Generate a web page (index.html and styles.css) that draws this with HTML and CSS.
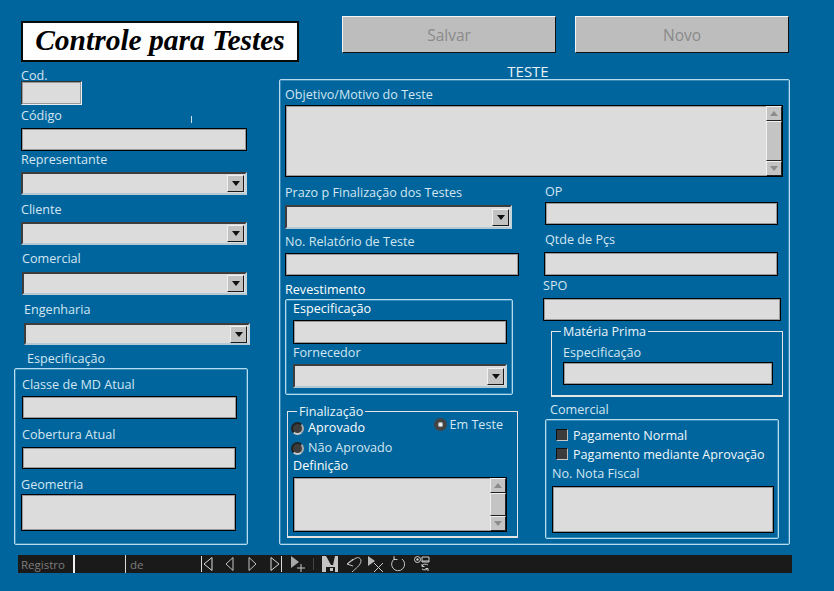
FILE: index.html
```html
<!DOCTYPE html>
<html lang="pt-BR">
<head>
  <meta charset="UTF-8" />
  <title>Controle para Testes</title>
  <link rel="stylesheet" href="styles.css">
</head>
<body>
  <div class="form">
    <!-- coluna da esquerda -->
    <div class="side">
      <div class="title">Controle para Testes</div>
      <label class="lbl l-cod">Cod.</label>
      <input class="inp i-cod" type="text" />
      <label class="lbl l-codigo">Código</label>
      <span class="tick"></span>
      <input class="inp i-codigo" type="text" />
      <label class="lbl l-rep">Representante</label>
      <div class="combo c-rep"><span class="arrow"><i></i></span></div>
      <label class="lbl l-cli">Cliente</label>
      <div class="combo c-cli"><span class="arrow"><i></i></span></div>
      <label class="lbl l-com">Comercial</label>
      <div class="combo c-com"><span class="arrow"><i></i></span></div>
      <label class="lbl l-eng">Engenharia</label>
      <div class="combo c-eng"><span class="arrow"><i></i></span></div>
      <label class="lbl l-esp">Especificação</label>
      <div class="box spec">
        <label class="lbl l-classe">Classe de MD Atual</label>
        <input class="inp i-classe" type="text" />
        <label class="lbl l-cob">Cobertura Atual</label>
        <input class="inp i-cob" type="text" />
        <label class="lbl l-geo">Geometria</label>
        <input class="inp i-geo" type="text" />
      </div>
    </div>

    <!-- coluna principal -->
    <div class="main">
      <div class="actions">
        <button class="btn" type="button">Salvar</button>
        <button class="btn" type="button">Novo</button>
      </div>
      <div class="teste">TESTE</div>
      <div class="box panel">
        <label class="lbl l-obj">Objetivo/Motivo do Teste</label>
        <div class="memo m-obj">
          <div class="scroll">
            <span class="sb-btn"><i class="up"></i></span>
            <span class="sb-thumb"></span>
            <span class="sb-btn"><i class="down"></i></span>
          </div>
        </div>
        <div class="cols">
          <div class="col-a">
            <label class="lbl l-prazo">Prazo p Finalização dos Testes</label>
            <div class="combo c-prazo"><span class="arrow"><i></i></span></div>
            <label class="lbl l-rel">No. Relatório de Teste</label>
            <input class="inp i-rel" type="text" />
            <label class="lbl strong l-rev">Revestimento</label>
            <div class="box rev">
              <label class="lbl strong l-resp">Especificação</label>
              <input class="inp i-resp" type="text" />
              <label class="lbl l-forn">Fornecedor</label>
              <div class="combo c-forn"><span class="arrow"><i></i></span></div>
            </div>
            <div class="group final">
              <span class="group-title t-final">Finalização</span>
              <div class="radios">
                <div class="radio-col">
                  <div class="radio r-apr"><span class="dot"></span><span class="opt strong">Aprovado</span></div>
                  <div class="radio r-nao"><span class="dot"></span><span class="opt">Não Aprovado</span></div>
                </div>
                <div class="radio r-teste"><span class="dot on"></span><span>Em Teste</span></div>
              </div>
              <label class="lbl strong l-def">Definição</label>
              <div class="memo m-def">
                <div class="scroll">
                  <span class="sb-btn"><i class="up"></i></span>
                  <span class="sb-thumb"></span>
                  <span class="sb-btn"><i class="down"></i></span>
                </div>
              </div>
            </div>
          </div>
          <div class="col-b">
            <label class="lbl l-op">OP</label>
            <input class="inp i-op" type="text" />
            <label class="lbl l-qtd">Qtde de Pçs</label>
            <input class="inp i-qtd" type="text" />
            <label class="lbl l-spo">SPO</label>
            <input class="inp i-spo" type="text" />
            <div class="group prima">
              <span class="group-title t-prima">Matéria Prima</span>
              <label class="lbl l-mesp">Especificação</label>
              <input class="inp i-mesp" type="text" />
            </div>
            <label class="lbl l-bcom">Comercial</label>
            <div class="box pay">
              <div class="check c-first"><span class="tickbox"></span><span>Pagamento Normal</span></div>
              <div class="check"><span class="tickbox"></span><span>Pagamento mediante Aprovação</span></div>
              <label class="lbl l-nota">No. Nota Fiscal</label>
              <input class="inp i-nota" type="text" />
            </div>
          </div>
        </div>
      </div>
    </div>
  </div>

  <!-- barra de navegação -->
  <div class="nav">
    <span class="nav-reg">Registro</span>
    <span class="nav-cur"></span>
    <span class="nav-de">de</span>
    <svg class="ico ico-first" width="12" height="16" viewBox="0 0 12 16" fill="none" stroke="#d8d8d8">
      <path d="M.5 0v16M11 1.500 3 8l8 6.500z" />
    </svg>
    <svg class="ico ico-prev" width="9" height="16" viewBox="0 0 9 16" fill="none" stroke="#c4c4c4">
      <path d="M8 1.500 1 8l7 6.500z" />
    </svg>
    <svg class="ico ico-next" width="9" height="16" viewBox="0 0 9 16" fill="none" stroke="#c4c4c4">
      <path d="m1 1.500 7 6.500-7 6.500z" />
    </svg>
    <svg class="ico ico-last" width="12" height="16" viewBox="0 0 12 16" fill="none" stroke="#d8d8d8">
      <path d="m1 1.500 8 6.500-8 6.500zM11.500 0v16" />
    </svg>
    <svg class="ico ico-new" width="15" height="16" viewBox="0 0 15 16" fill="none">
      <path d="M0 0 8 6 0 12z" fill="#a8a8a8" />
      <path d="M10 8v8M6 12h8" stroke="#c8c8c8" />
    </svg>
    <span class="nav-sep"></span>
    <svg class="ico ico-save" width="16" height="16" viewBox="0 0 16 16">
      <path d="M0 0h16v16H0z" fill="#c4c4c4" />
      <path d="M4 0h9l-2 9H9z" fill="#1a1a1a" />
      <path d="M4 11h9v5H4z" fill="#1a1a1a" />
      <path d="M8 12h3v3H8z" fill="#c4c4c4" />
    </svg>
    <svg class="ico ico-undo" width="16" height="16" viewBox="0 0 16 16" fill="none" stroke="#c4c4c4">
      <path d="M7 3 1 8l6 2M1 8l9-6c2-1 5 0 5 3 0 4-6 8-9 11" />
    </svg>
    <svg class="ico ico-del" width="16" height="16" viewBox="0 0 16 16" fill="none">
      <path d="M0 0 7 5 0 10z" fill="#b8b8b8" />
      <path d="m6 7 9 9m0-9-9 9" stroke="#c8c8c8" />
    </svg>
    <svg class="ico ico-redo" width="15" height="16" viewBox="0 0 15 16" fill="none" stroke="#c4c4c4">
      <path d="M4 2.500A6.500 6.500 0 1 0 11 3M3 0v3.500h3.500" />
    </svg>
    <svg class="ico ico-ref" width="16" height="16" viewBox="0 0 16 16" fill="none" stroke="#d0d0d0">
      <circle cx="3.500" cy="3.500" r="3" />
      <circle cx="3.500" cy="3.500" r="1.200" fill="#d0d0d0" stroke="none" />
      <path d="M8 1h7v5H8zM8 5h7" />
      <path d="M14 9c-2-1.500-5-1-6 1M8 8v2.500h2.500M8 13c2 1.500 5 1 6-1M14 15v-2.500h-2.500" />
    </svg>
  </div>
</body>
</html>
```

FILE: styles.css
```css
html, body {
  margin: 0;
  height: 591px;
  overflow: hidden;
}
body {
  background: #00659c;
  font-family: 'Open Sans', 'Noto Sans', sans-serif;
  font-size: 12.6px;
  color: #d3e6f2;
}
.form {
  display: flex;
  height: 555px;
}

/* genericos */
.lbl {
  display: block;
  height: 13px;
  line-height: 15px;
  white-space: nowrap;
}
.strong {
  color: #fff;
}
.inp {
  display: block;
  box-sizing: border-box;
  padding: 0;
  background: #dcdcdc;
  border: 1px solid #000;
  box-shadow: inset 0 0 0 1px rgba(0, 0, 0, .3);
  border-radius: 0;
  outline: none;
}
.combo {
  box-sizing: border-box;
  display: flex;
  justify-content: flex-end;
  align-items: center;
  padding-right: 1px;
  background: #dcdcdc;
  border: 2px solid;
  border-color: #3d3d3d #c4d4dc #b4c8d4 #3d3d3d;
}
.arrow {
  box-sizing: border-box;
  width: 17px;
  height: 17px;
  display: flex;
  align-items: center;
  justify-content: center;
  background: #c2c2c2;
  border: 1px solid;
  border-color: #f0f0f0 #1a1a1a #1a1a1a #f0f0f0;
}
.arrow i {
  width: 0;
  height: 0;
  border-left: 4px solid transparent;
  border-right: 4px solid transparent;
  border-top: 5px solid #111;
}
.box {
  box-sizing: border-box;
  border: 1px solid #b4dcf0;
  box-shadow: inset 0 0 0 1px rgba(160, 205, 230, .35);
  border-radius: 2px;
}
.group {
  position: relative;
  box-sizing: border-box;
  border: 1px solid #e4e4e4;
  border-bottom-width: 2px;
}
.group-title {
  position: absolute;
  top: -7px;
  padding: 0 2px;
  line-height: 14px;
  background: #00659c;
  color: #eaf4fa;
}

/* coluna esquerda */
.side {
  position: relative;
  width: 279px;
  flex: none;
  padding-top: 21px;
  box-sizing: border-box;
}
.title {
  box-sizing: border-box;
  width: 278px;
  height: 41px;
  margin-left: 21px;
  background: #fff;
  border: 2px solid #0a0a0a;
  color: #000;
  font: italic bold 29.500px/35px 'Liberation Serif', serif;
  text-align: center;
  white-space: nowrap;
}
.l-cod { margin: 6px 0 0 21px; }
.i-cod {
  width: 61px;
  height: 24px;
  margin-left: 21px;
  border-color: #333 #e8eef2 #e8eef2 #333;
}
.l-codigo { margin: 3px 0 7px 21px; }
.tick {
  position: absolute;
  left: 191px;
  top: 116px;
  width: 1px;
  height: 7px;
  background: #cfe0ea;
}
.i-codigo { width: 226px; height: 23px; margin-left: 21px; }
.l-rep { margin: 1px 0 7px 21px; }
.c-rep { width: 226px; height: 23px; margin-left: 21px; }
.l-cli { margin: 7px 0 7px 21px; }
.c-cli { width: 226px; height: 23px; margin-left: 21px; }
.l-com { margin: 6px 0 8px 22px; }
.c-com { width: 225px; height: 23px; margin-left: 22px; }
.l-eng { margin: 7px 0 8px 24px; }
.c-eng { width: 226px; height: 22px; margin-left: 24px; }
.l-esp { margin: 6px 0 0 27px; }
.spec {
  width: 234px;
  height: 177px;
  margin: 4px 0 0 14px;
  padding-left: 7px;
}
.l-classe { margin: 8px 0 6px; }
.i-classe { width: 215px; height: 23px; }
.l-cob { margin: 8px 0 7px; }
.i-cob { width: 214px; height: 22px; }
.l-geo { margin: 8px 0 4px -1px; }
.i-geo { width: 215px; height: 37px; margin-left: -1px; }

/* coluna principal */
.main {
  width: 511px;
  flex: none;
}
.actions {
  display: flex;
  gap: 19px;
  padding: 16px 0 0 63px;
}
.btn {
  width: 214px;
  height: 37px;
  padding: 0;
  background: #bdbdbd;
  border: 1px solid;
  border-color: #f4f4f4 #111 #111 #f4f4f4;
  font-family: inherit;
  font-size: 15.500px;
  color: #8a8a8a;
}
.teste {
  width: 498px;
  height: 15px;
  margin-top: 11px;
  font-size: 15px;
  line-height: 15px;
  text-align: center;
  color: #e6f1f8;
}
.panel {
  width: 511px;
  height: 466px;
  padding: 7px 0 0 5px;
}
.l-obj { margin-bottom: 5px; }
.memo {
  box-sizing: border-box;
  display: flex;
  justify-content: flex-end;
  background: #dcdcdc;
  border: 1px solid #000;
  box-shadow: inset 0 0 0 1px rgba(0, 0, 0, .3);
}
.m-obj { width: 498px; height: 72px; }
.scroll {
  display: flex;
  flex-direction: column;
  width: 16px;
}
.sb-btn {
  flex: none;
  height: 15px;
  display: flex;
  align-items: center;
  justify-content: center;
  box-sizing: border-box;
  background: #c4c4c4;
  border: 1px solid;
  border-color: #f0f0f0 #222 #222 #f0f0f0;
}
.sb-thumb {
  flex: 1;
  box-sizing: border-box;
  background: #c4c4c4;
  border: 1px solid;
  border-color: #f0f0f0 #222 #222 #f0f0f0;
}
.sb-btn i {
  width: 0;
  height: 0;
  border-left: 4px solid transparent;
  border-right: 4px solid transparent;
}
.sb-btn .up { border-bottom: 5px solid #8c8c8c; }
.sb-btn .down { border-top: 5px solid #8c8c8c; }
.cols { display: flex; }
.col-a { width: 258px; flex: none; }
.l-prazo { margin: 8px 0 7px; }
.c-prazo { width: 227px; height: 24px; }
.l-rel { margin: 5px 0 6px; }
.i-rel { width: 234px; height: 23px; }
.l-rev { margin: 6px 0 4px; }
.rev {
  width: 228px;
  height: 96px;
  padding-left: 7px;
}
.l-resp { margin: 1px 0 6px; }
.i-resp { width: 214px; height: 24px; }
.l-forn { margin: 1px 0 6px; }
.c-forn { width: 214px; height: 24px; }
.final {
  width: 231px;
  height: 127px;
  margin: 16px 0 0 2px;
}
.t-final { left: 9px; }
.radios {
  box-sizing: border-box;
  display: flex;
  justify-content: space-between;
  padding: 5px 14px 0 3px;
  height: 38px;
}
.radio {
  display: flex;
  align-items: center;
  gap: 4px;
  height: 14px;
}
.radio-col {
  display: flex;
  flex-direction: column;
  gap: 6px;
  padding-top: 4px;
}
.r-teste { gap: 3px; }
.dot {
  box-sizing: border-box;
  width: 13px;
  height: 13px;
  border-radius: 50%;
  background: #3c3c3c;
  border: 2px solid;
  border-color: #222 #aaa #ccc #222;
}
.dot.on {
  background: #f2f2f2;
  border: 4px solid #444;
  box-shadow: inset 0 0 0 1px #bbb;
}
.opt {
  line-height: 14px;
}
.l-def { margin: 8px 0 6px 5px; }
.m-def { width: 214px; height: 55px; margin-left: 5px; }
.col-b { flex: 1; }
.l-op { margin: 7px 0 5px 2px; }
.i-op { width: 233px; height: 23px; margin-left: 2px; }
.l-qtd { margin: 7px 0 7px 2px; }
.i-qtd { width: 234px; height: 24px; margin-left: 1px; }
.l-spo { margin: 2px 0 7px; }
.i-spo { width: 238px; height: 23px; }
.prima {
  width: 232px;
  height: 66px;
  margin: 10px 0 0 8px;
  padding-left: 11px;
}
.t-prima { left: 9px; }
.l-mesp { margin: 13px 0 4px; }
.i-mesp { width: 210px; height: 23px; }
.l-bcom { margin: 5px 0 4px 7px; }
.pay {
  width: 234px;
  height: 120px;
  margin-left: 2px;
  padding: 6px 0 0 10px;
}
.check {
  display: flex;
  align-items: center;
  gap: 5px;
  height: 18px;
  color: #f2f8fc;
  white-space: nowrap;
}
.c-first { margin-bottom: 1px; }
.tickbox {
  box-sizing: border-box;
  width: 12px;
  height: 12px;
  background: #3c3c3c;
  border: 1px solid;
  border-color: #111 #bbb #ccc #111;
}
.l-nota { margin: 3px 0 7px -4px; }
.i-nota { width: 222px; height: 47px; margin-left: -4px; }

/* barra inferior */
.nav {
  display: flex;
  align-items: center;
  box-sizing: border-box;
  width: 774px;
  height: 18px;
  margin-left: 18px;
  padding-left: 3px;
  background: #1a1a1a;
  color: #7d7d7d;
  font-size: 11.500px;
}
.nav-reg { width: 52px; }
.nav-cur {
  box-sizing: border-box;
  width: 53px;
  height: 18px;
  border-left: 2px solid #f0f0f0;
  border-right: 1px solid #d8d8d8;
}
.nav-de { width: 75px; padding-left: 4px; box-sizing: border-box; }
.ico { flex: none; }
.ico-prev { margin-left: 12px; }
.ico-next { margin-left: 14px; }
.ico-last { margin-left: 13px; }
.ico-new { margin-left: 9px; }
.nav-sep { width: 1px; height: 12px; margin-left: 7px; background: #444; }
.ico-save { margin-left: 8px; }
.ico-undo { margin-left: 8px; }
.ico-del { margin-left: 6px; }
.ico-redo { margin-left: 7px; }
.ico-ref { margin-left: 8px; }
```
